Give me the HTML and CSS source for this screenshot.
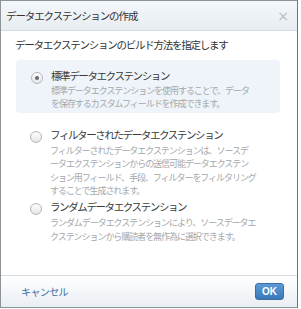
FILE: index.html
```html
<!DOCTYPE html>
<html lang="ja">
<head>
<meta charset="utf-8">
<link rel="stylesheet" href="styles.css">
</head>
<body>
<div class="dialog">
  <div class="header">
    <span class="title">データエクステンションの作成</span>
    <span class="close">×</span>
  </div>
  <div class="content">
    <div class="subtitle">データエクステンションのビルド方法を指定します</div>
    <div class="option selected opt1">
      <span class="radio checked"></span>
      <div class="text">
        <div class="label">標準データエクステンション</div>
        <div class="desc">標準データエクステンションを使用することで、データ<br>を保存するカスタムフィールドを作成できます。</div>
      </div>
    </div>
    <div class="option opt2">
      <span class="radio"></span>
      <div class="text">
        <div class="label">フィルターされたデータエクステンション</div>
        <div class="desc">フィルターされたデータエクステンションは、ソースデ<br>ータエクステンションからの送信可能データエクステン<br>ション用フィールド、手段、フィルターをフィルタリング<br>することで生成されます。</div>
      </div>
    </div>
    <div class="option opt3">
      <span class="radio"></span>
      <div class="text">
        <div class="label">ランダムデータエクステンション</div>
        <div class="desc">ランダムデータエクステンションにより、ソースデータエ<br>クステンションから購読者を無作為に選択できます。</div>
      </div>
    </div>
  </div>
  <div class="footer">
    <span class="cancel">キャンセル</span>
    <span class="ok">OK</span>
  </div>
</div>
</body>
</html>
```
FILE: styles.css
```css
html, body {
  margin: 0;
  padding: 0;
  background: #ffffff;
}
body {
  font-family: "Noto Sans CJK JP", "Noto Sans", sans-serif;
  color: #333333;
}
.dialog {
  width: 296px;
  height: 306px;
  border: 1px solid #8e9398;
  border-right-color: #6f7377;
  display: flex;
  flex-direction: column;
  background: #ffffff;
}
.header {
  height: 29px;
  flex: none;
  display: flex;
  align-items: center;
  justify-content: space-between;
  padding: 0 8px 0 5px;
  background: linear-gradient(#f4f7fa, #e7edf2);
  border-bottom: 1px solid #d3dbe2;
}
.title {
  font-size: 10.5px;
  letter-spacing: -1.1px;
  color: #333;
}
.close {
  font-size: 14px;
  color: #b8bec4;
  font-family: "DejaVu Sans", sans-serif;
}
.content {
  flex: 1;
  padding: 6px 17px 0 14px;
}
.subtitle {
  font-size: 10.5px;
  line-height: 16px;
  letter-spacing: -1.25px;
  color: #333;
}
.option {
  display: flex;
  align-items: flex-start;
  padding: 10px 0 2px 15px;
  border-radius: 4px;
}
.opt1 {
  margin-top: 7px;
  margin-left: 1px;
  background: #eef4f9;
}
.opt2 {
  margin-top: 4px;
  padding-top: 12px;
}
.opt3 {
  margin-top: 2px;
  padding-top: 0;
}
.radio {
  width: 10px;
  height: 10px;
  border-radius: 50%;
  border: 1px solid #b4b8bc;
  background: linear-gradient(#fdfdfd, #e4e6e8);
  flex: none;
  margin-top: 2px;
  margin-right: 8px;
  position: relative;
}
.radio.checked::after {
  content: "";
  position: absolute;
  left: 3px;
  top: 3px;
  width: 4px;
  height: 4px;
  border-radius: 50%;
  background: #666a6e;
}
.label {
  font-size: 10.5px;
  line-height: 15px;
  letter-spacing: -1.4px;
  color: #3a3a3a;
  margin-top: -2px;
  margin-bottom: 2px;
}
.desc {
  font-size: 9px;
  line-height: 13.4px;
  letter-spacing: -1.05px;
  color: #a4a8ac;
  white-space: nowrap;
}
.opt1 .desc {
  margin-top: -1px;
}
.footer {
  height: 31px;
  flex: none;
  border-top: 1px solid #d5dbe1;
  background: linear-gradient(#ffffff, #e9eef3);
  display: flex;
  align-items: center;
  justify-content: space-between;
  padding: 0 13px 0 20px;
}
.cancel {
  font-size: 10px;
  letter-spacing: -0.6px;
  color: #3a6ea5;
}
.ok {
  width: 29px;
  height: 17px;
  border-radius: 3px;
  background: linear-gradient(#5b9ad6, #3a78b8);
  border: 1px solid #3b6fa3;
  box-sizing: border-box;
  color: #fff;
  font-family: "Liberation Sans", sans-serif;
  font-weight: bold;
  font-size: 10px;
  display: flex;
  align-items: center;
  justify-content: center;
}
```
